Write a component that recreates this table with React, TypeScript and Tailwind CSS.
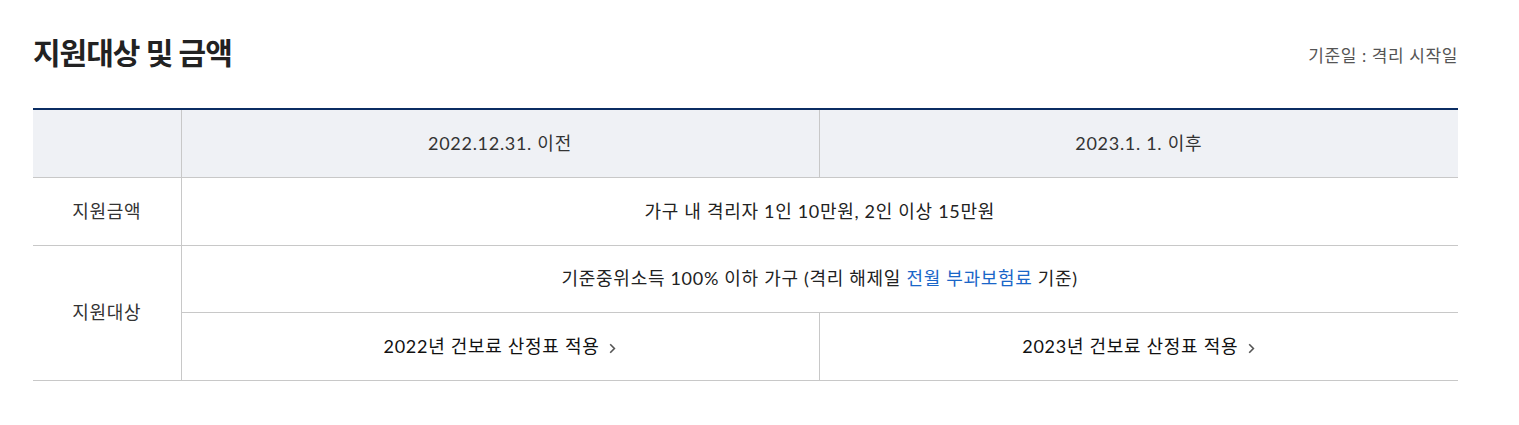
import { ReactNode } from "react";

const font = { fontFamily: '"Lato", "Noto Sans CJK KR", "Noto Sans", sans-serif' };

const Chevron = () => (
  <svg width="7" height="11" viewBox="0 0 7 11" className="ml-[10px] inline-block align-[-1px]" aria-hidden>
    <path d="M1.2 1.2 L5.4 5.5 L1.2 9.8" fill="none" stroke="#555" strokeWidth="1.6" />
  </svg>
);

const Cell = ({
  children,
  className = "",
  colSpan,
  rowSpan,
}: {
  children: ReactNode;
  className?: string;
  colSpan?: number;
  rowSpan?: number;
}) => (
  <td
    colSpan={colSpan}
    rowSpan={rowSpan}
    className={`border-b border-[#c8c8c8] text-center align-middle text-[18px] tracking-[0.7px] ${className}`}
  >
    {children}
  </td>
);

export default function App() {
  return (
    <div className="bg-white pl-[33px] pr-[61px] pt-[30px] pb-[44px]" style={font}>
      <div className="flex items-center justify-between">
        <h2 className="text-[30px] font-bold tracking-[-1px] text-[#222]">지원대상 및 금액</h2>
        <span className="pt-[6px] text-[17px] tracking-[0.6px] text-[#555]">기준일 : 격리 시작일</span>
      </div>

      <table className="mt-[33px] w-full table-fixed border-collapse border-t-2 border-[#0b2d63] text-[#333]">
        <colgroup>
          <col className="w-[148px]" />
          <col />
          <col className="w-[639px]" />
        </colgroup>
        <thead>
          <tr className="bg-[#eff1f5]">
            <th className="h-[68px] border-b border-r border-[#c8c8c8]" />
            <th className="h-[68px] border-b border-r border-[#c8c8c8] text-[18px] font-normal tracking-[0.7px]">
              2022.12.31. 이전
            </th>
            <th className="h-[68px] border-b border-[#c8c8c8] text-[18px] font-normal tracking-[0.7px]">
              2023.1. 1. 이후
            </th>
          </tr>
        </thead>
        <tbody>
          <tr className="h-[68px]">
            <Cell className="border-r">지원금액</Cell>
            <Cell colSpan={2} className="text-[#222]">
              가구 내 격리자 1인 10만원, 2인 이상 15만원
            </Cell>
          </tr>
          <tr className="h-[67px]">
            <Cell rowSpan={2} className="border-r">
              지원대상
            </Cell>
            <Cell colSpan={2} className="text-[#222]">
              기준중위소득 100% 이하 가구 (격리 해제일 <span className="text-[#1a66c8]">전월 부과보험료</span> 기준)
            </Cell>
          </tr>
          <tr className="h-[68px]">
            <Cell className="border-r text-[#111]">
              2022년 건보료 산정표 적용
              <Chevron />
            </Cell>
            <Cell className="text-[#111]">
              2023년 건보료 산정표 적용
              <Chevron />
            </Cell>
          </tr>
        </tbody>
      </table>
    </div>
  );
}
